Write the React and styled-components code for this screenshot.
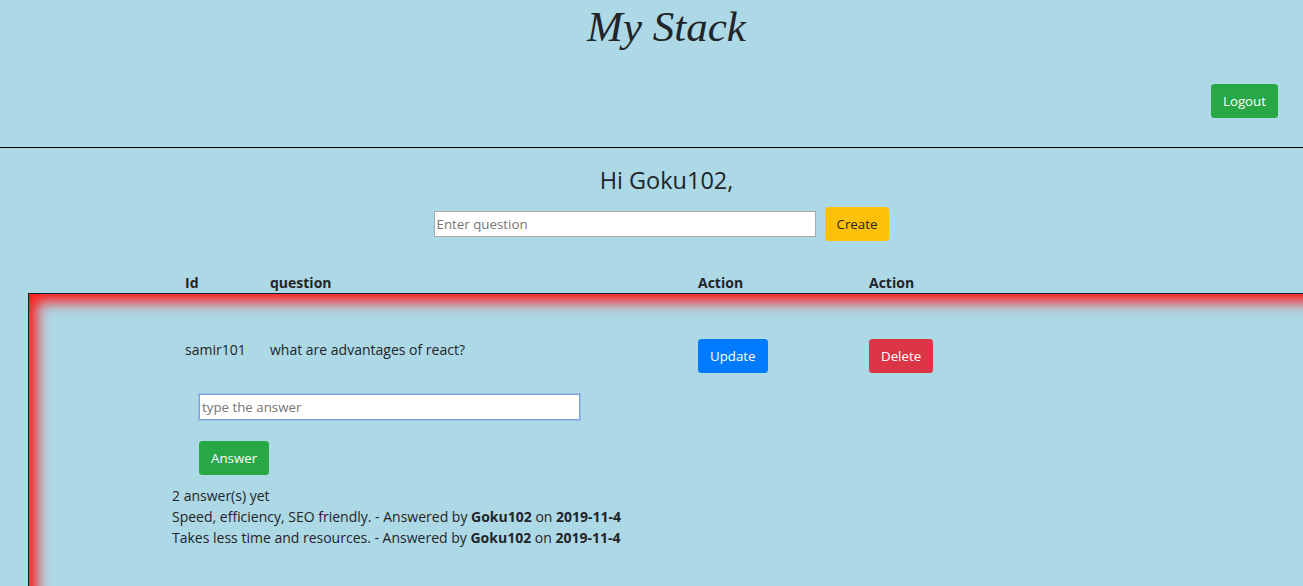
import React from "react";
import styled, { createGlobalStyle } from "styled-components";

const GlobalStyle = createGlobalStyle`
  html, body {
    margin: 0;
    padding: 0;
    background: #add8e6;
    overflow-x: hidden;
  }
  body {
    font-family: "Open Sans", "Noto Sans", sans-serif;
    font-size: 14px;
    color: #212529;
  }
  * { box-sizing: border-box; }
`;

const Page = styled.div`
  min-height: 586px;
  background: #add8e6;
`;

const Header = styled.header`
  height: 148px;
  border-bottom: 1px solid #000;
  display: flex;
  flex-direction: column;
`;

const Title = styled.h1`
  margin: 0;
  padding: 2px 0 0 30px;
  font-family: "Liberation Serif", "Times New Roman", serif;
  font-style: italic;
  font-weight: normal;
  font-size: 43px;
  line-height: 50px;
  text-align: center;
`;

const HeaderBar = styled.div`
  display: flex;
  justify-content: flex-end;
  padding: 32px 25px 0 0;
`;

const Button = styled.button`
  font-family: inherit;
  font-size: 13.3px;
  height: 34px;
  padding: 0 12px;
  border: none;
  border-radius: 3.5px;
  color: ${(p) => (p.$dark ? "#212529" : "#fff")};
  background: ${(p) => p.$bg};
  cursor: pointer;
`;

const Greeting = styled.h3`
  margin: 16px 0 0;
  padding-left: 30px;
  font-weight: 500;
  font-size: 23.5px;
  line-height: 32px;
  text-align: center;
`;

const CreateRow = styled.div`
  display: flex;
  justify-content: center;
  align-items: center;
  gap: 9px;
  margin-top: 11px;
  padding-left: 20px;
`;

const TextInput = styled.input`
  font-family: inherit;
  font-size: 13.3px;
  width: ${(p) => p.$w}px;
  height: 26px;
  padding: 0 2px;
  background: #fff;
  border: 1px solid ${(p) => (p.$focus ? "#7ba5e0" : "#a9a9a9")};
  box-shadow: ${(p) => (p.$focus ? "0 0 0 1px #9cbcea" : "none")};
  outline: none;
  color: #212529;
  &::placeholder { color: #757575; }
`;

const Cols = styled.div`
  display: grid;
  grid-template-columns: 85px 428px 171px 1fr;
  align-items: center;
  padding-left: ${(p) => p.$pad}px;
`;

const HeadCell = styled.div`
  font-weight: 700;
  line-height: 20px;
`;

const HeadRow = styled(Cols)`
  margin-top: 32px;
  height: 20px;
`;

const Card = styled.div`
  margin: 0 -60px 0 28px;
  height: 320px;
  border-top: 1px solid #12242a;
  border-left: 1px solid #12242a;
  box-shadow: inset 8px 8px 14px #ff1a1a;
`;

const ItemRow = styled(Cols)`
  padding-top: 45px;
`;

const Cell = styled.div`
  line-height: 20px;
  align-self: ${(p) => (p.$top ? "start" : "center")};
  padding-top: ${(p) => (p.$top ? 1 : 0)}px;
`;

const AnswerBlock = styled.div`
  display: flex;
  flex-direction: column;
  align-items: flex-start;
  gap: 21px;
  padding: 21px 0 0 170px;
`;

const AnswerList = styled.div`
  padding: 10px 0 0 143px;
  line-height: 21px;
`;

export default function App() {
  return (
    <Page>
      <GlobalStyle />
      <Header>
        <Title>My Stack</Title>
        <HeaderBar>
          <Button $bg="#28a745">Logout</Button>
        </HeaderBar>
      </Header>
      <Greeting>Hi Goku102,</Greeting>
      <CreateRow>
        <TextInput $w={382} placeholder="Enter question" />
        <Button $bg="#ffc107" $dark>Create</Button>
      </CreateRow>
      <HeadRow $pad={185}>
        <HeadCell>Id</HeadCell>
        <HeadCell>question</HeadCell>
        <HeadCell>Action</HeadCell>
        <HeadCell>Action</HeadCell>
      </HeadRow>
      <Card>
        <ItemRow $pad={156}>
          <Cell $top>samir101</Cell>
          <Cell $top>what are advantages of react?</Cell>
          <Cell>
            <Button $bg="#007bff">Update</Button>
          </Cell>
          <Cell>
            <Button $bg="#dc3545">Delete</Button>
          </Cell>
        </ItemRow>
        <AnswerBlock>
          <TextInput $w={381} $focus placeholder="type the answer" />
          <Button $bg="#28a745">Answer</Button>
        </AnswerBlock>
        <AnswerList>
          <div>2 answer(s) yet</div>
          <div>
            Speed, efficiency, SEO friendly. - Answered by <b>Goku102</b> on{" "}
            <b>2019-11-4</b>
          </div>
          <div>
            Takes less time and resources. - Answered by <b>Goku102</b> on{" "}
            <b>2019-11-4</b>
          </div>
        </AnswerList>
      </Card>
    </Page>
  );
}
